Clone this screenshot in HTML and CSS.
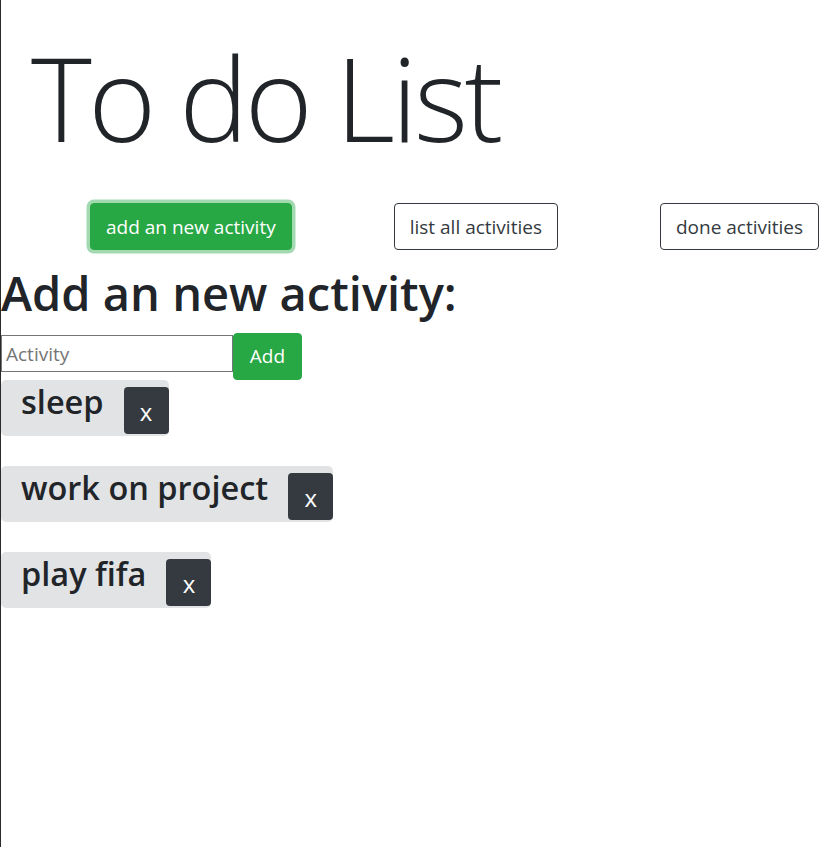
FILE: index.html
```html
<!DOCTYPE html>
<html>
<head>
<meta charset="utf-8">
<link rel="stylesheet" href="styles.css">
</head>
<body>
<div class="page">
  <h1 class="title">To do List</h1>
  <div class="nav">
    <button class="btn btn-nav btn-green btn-focus">add an new activity</button>
    <button class="btn btn-nav btn-outline">list all activities</button>
    <button class="btn btn-nav btn-outline">done activities</button>
  </div>
  <h2 class="section-title">Add an new activity:</h2>
  <div class="add-form">
    <input class="field" type="text" placeholder="Activity">
    <button class="btn btn-green btn-add">Add</button>
  </div>
  <ul class="items">
    <li class="item"><span class="item-text">sleep</span><button class="btn-x">x</button></li>
    <li class="item"><span class="item-text">work on project</span><button class="btn-x">x</button></li>
    <li class="item"><span class="item-text">play fifa</span><button class="btn-x">x</button></li>
  </ul>
</div>
</body>
</html>
```
FILE: styles.css
```css
* { box-sizing: border-box; }
html, body { margin: 0; padding: 0; height: 100%; }
body {
  font-family: "Open Sans", "Noto Sans", sans-serif;
  color: #212529;
  background: #fff;
  border-left: 1px solid #2b2b2b;
}
.page { display: flex; flex-direction: column; align-items: flex-start; }
.title {
  margin: 0;
  padding: 28px 0 0 30px;
  font-size: 116px;
  font-weight: 300;
  line-height: 139px;
  letter-spacing: -3.6px;
}
.nav {
  display: flex;
  align-items: center;
  gap: 102px;
  padding-left: 89px;
  margin-top: 36px;
}
.btn {
  font-family: inherit;
  font-size: 19px;
  line-height: 29px;
  padding: 8px 15px;
  border-radius: 4px;
  border: 1px solid transparent;
  cursor: pointer;
}
.btn-nav { padding: 9px 15px 7px 15px; }
.btn-green { background: #28a745; color: #fff; border-color: #28a745; }
.btn-focus { box-shadow: 0 0 0 3.5px rgba(72, 180, 97, .5); }
.btn-outline { background: #fff; color: #343a40; border-color: #343a40; }
.section-title {
  margin: 13px 0 0 0;
  font-size: 47px;
  font-weight: 600;
  line-height: 60px;
}
.add-form { display: flex; align-items: flex-end; margin-top: 10px; }
.field {
  width: 232px;
  height: 37px;
  font-family: inherit;
  font-size: 19px;
  padding: 1px 4px;
  border: 1px solid #767676;
  margin-bottom: 8px;
}
.field::placeholder { color: #757575; }
.btn-add { padding: 8px 15px; width: 69px; height: 47px; font-size: 19px; }
.items { list-style: none; margin: 0; padding: 0; display: flex; flex-direction: column; align-items: flex-start; gap: 30px; }
.item {
  display: flex;
  align-items: flex-end;
  height: 56px;
  background: #e2e3e5;
  border-radius: 5px;
  padding: 0 0 2px 20px;
  gap: 20px;
}
.item-text {
  font-size: 32.5px;
  font-weight: 600;
  line-height: 40px;
  align-self: flex-start;
  padding-top: 2px;
}
.btn-x {
  width: 45px;
  height: 47px;
  background: #343a40;
  color: #fff;
  border: none;
  border-radius: 4px;
  font-family: inherit;
  font-size: 24px;
  line-height: 30px;
  padding: 2px 0 0 0;
}
```
